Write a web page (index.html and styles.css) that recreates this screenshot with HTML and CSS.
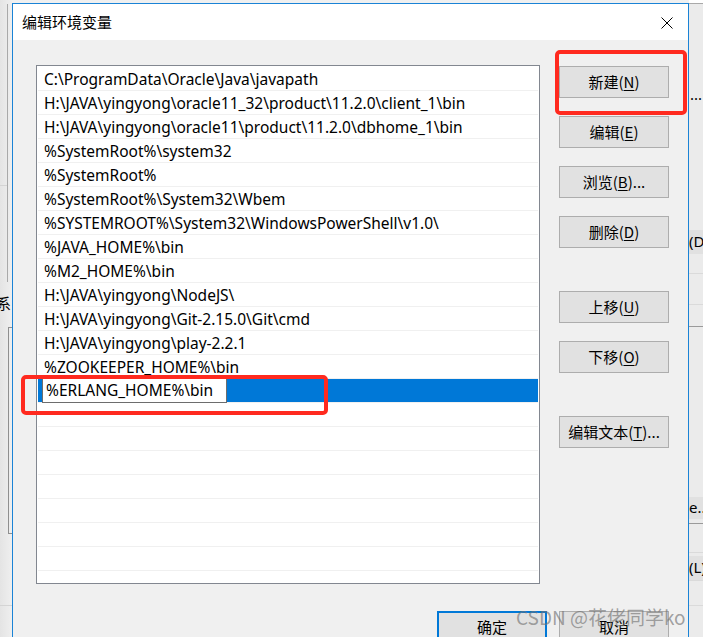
FILE: index.html
```html
<!DOCTYPE html>
<html lang="zh-CN">
<head>
<meta charset="utf-8">
<title>编辑环境变量</title>
<link rel="stylesheet" href="styles.css">
</head>
<body>
<div class="desktop">
  <div class="bgwin bgwin-left">
    <div class="bl-line"></div>
    <div class="bl-hline"></div>
    <div class="bl-char">系</div>
    <div class="bl-box"></div>
    <div class="bl-sep"></div>
  </div>
  <div class="bgwin bgwin-right">
    <div class="br-top"></div>
    <div class="br-dots">...</div>
    <div class="br-btn br-btn-d">(D)</div>
    <div class="br-line br-l1"></div>
    <div class="br-line br-l2"></div>
    <div class="br-line dark br-l3"></div>
    <div class="br-btn br-btn-e">e...</div>
    <div class="br-line dark br-l4"></div>
    <div class="br-line br-l5"></div>
    <div class="br-btn br-btn-l">(L)</div>
    <div class="br-line br-l6"></div>
    <div class="br-line br-l7"></div>
  </div>

  <div class="dialog">
    <div class="titlebar">
      <span class="title">编辑环境变量</span>
      <svg class="close" width="12" height="12" viewBox="0 0 12 12" aria-hidden="true">
        <path d="M0.5 0.5 L11.5 11.5 M11.5 0.5 L0.5 11.5" stroke="#000" stroke-width="1" fill="none"/>
      </svg>
    </div>
    <div class="body">
      <div class="main">
        <div class="list">
          <div class="row">C:\ProgramData\Oracle\Java\javapath</div>
          <div class="row">H:\JAVA\yingyong\oracle11_32\product\11.2.0\client_1\bin</div>
          <div class="row">H:\JAVA\yingyong\oracle11\product\11.2.0\dbhome_1\bin</div>
          <div class="row">%SystemRoot%\system32</div>
          <div class="row">%SystemRoot%</div>
          <div class="row">%SystemRoot%\System32\Wbem</div>
          <div class="row">%SYSTEMROOT%\System32\WindowsPowerShell\v1.0\</div>
          <div class="row">%JAVA_HOME%\bin</div>
          <div class="row">%M2_HOME%\bin</div>
          <div class="row">H:\JAVA\yingyong\NodeJS\</div>
          <div class="row">H:\JAVA\yingyong\Git-2.15.0\Git\cmd</div>
          <div class="row">H:\JAVA\yingyong\play-2.2.1</div>
          <div class="row">%ZOOKEEPER_HOME%\bin</div>
          <div class="row selected"><span class="editbox">%ERLANG_HOME%\bin</span></div>
          <div class="row"></div>
          <div class="row"></div>
          <div class="row"></div>
          <div class="row"></div>
          <div class="row"></div>
          <div class="row"></div>
          <div class="row"></div>
          <div class="row"></div>
        </div>
        <div class="side">
          <div class="btn">新建(<u>N</u>)</div>
          <div class="btn">编辑(<u>E</u>)</div>
          <div class="btn">浏览(<u>B</u>)...</div>
          <div class="btn">删除(<u>D</u>)</div>
          <div class="btn spaced">上移(<u>U</u>)</div>
          <div class="btn">下移(<u>O</u>)</div>
          <div class="btn spaced">编辑文本(<u>T</u>)...</div>
        </div>
      </div>
      <div class="footer">
        <div class="btn default">确定</div>
        <div class="btn">取消</div>
      </div>
    </div>
  </div>

  <div class="mark mark-edit"></div>
  <div class="mark mark-new"></div>
  <div class="watermark">CSDN @花佬同学ko</div>
</div>
</body>
</html>
```

FILE: styles.css
```css
* { box-sizing: border-box; }

html, body {
  margin: 0;
  padding: 0;
}

body {
  width: 703px;
  height: 637px;
  overflow: hidden;
  background: #f0f0f0;
  font-family: "Noto Sans", "Noto Sans CJK SC", sans-serif;
  font-size: 15px;
  color: #000;
}

.desktop {
  position: relative;
  width: 703px;
  height: 637px;
  overflow: hidden;
}

/* ---------- background window pieces ---------- */
.bgwin {
  position: absolute;
  top: 0;
  height: 637px;
  overflow: hidden;
}

.bgwin-left {
  left: 0;
  width: 12px;
  background: linear-gradient(to right, #e4e4e4, #efefef);
}

.bl-line {
  position: absolute;
  left: 7px;
  top: 4px;
  width: 1px;
  height: 278px;
  background: #a9a9a9;
}

.bl-hline {
  position: absolute;
  left: 0;
  top: 185px;
  width: 7px;
  height: 1px;
  background: #d4d4d4;
}

.bl-char {
  position: absolute;
  left: -4px;
  top: 293px;
  font-family: "Noto Sans CJK SC", sans-serif;
  font-size: 15px;
  line-height: 20px;
}

.bl-box {
  position: absolute;
  left: 8px;
  top: 327px;
  width: 20px;
  height: 207px;
  border: 1px solid #8f8f8f;
}

.bl-sep {
  position: absolute;
  left: 0;
  top: 605px;
  width: 12px;
  height: 1px;
  background: #d4d4d4;
}

.bgwin-right {
  left: 689px;
  width: 14px;
  background: #ebebeb;
}

.br-top {
  position: absolute;
  left: 0;
  top: 0;
  width: 14px;
  height: 4px;
  background: #fff;
  border-bottom: 1px solid #a9a9a9;
}

.br-dots {
  position: absolute;
  left: 1px;
  top: 84px;
  font-size: 15px;
  line-height: 20px;
}

.br-btn {
  position: absolute;
  left: 0;
  width: 14px;
  height: 24px;
  background: #e1e1e1;
  font-size: 15px;
  line-height: 23px;
  white-space: nowrap;
  overflow: hidden;
}

.br-btn-d { top: 230px; }
.br-btn-e { top: 497px; height: 22px; line-height: 21px; }
.br-btn-l { top: 556px; height: 24px; }

.br-line {
  position: absolute;
  left: 0;
  width: 14px;
  height: 1px;
  background: #dadada;
}

.br-line.dark { background: #9a9a9a; }

.br-l1 { top: 273px; }
.br-l2 { top: 304px; }
.br-l3 { top: 326px; }
.br-l4 { top: 523px; }
.br-l5 { top: 552px; }
.br-l6 { top: 580px; }
.br-l7 { top: 605px; }

/* ---------- dialog ---------- */
.dialog {
  position: absolute;
  left: 12px;
  top: 3px;
  width: 677px;
  height: 660px;
  border: 1px solid #1a83d6;
  background: #f0f0f0;
  display: flex;
  flex-direction: column;
}

.titlebar {
  height: 36px;
  background: #fff;
  display: flex;
  align-items: center;
  justify-content: space-between;
  padding: 0 15px 0 9px;
  flex: none;
}

.title {
  font-family: "Noto Sans CJK SC", sans-serif;
  font-size: 15px;
  line-height: 20px;
  margin-top: -1px;
}

.close {
  display: block;
  margin-top: 1px;
}

.body {
  padding: 25px 19px 0 23px;
}

.main {
  display: flex;
  gap: 19px;
}

.list {
  width: 504px;
  height: 519px;
  border: 1px solid #828790;
  background: #fff;
  padding: 1px;
  overflow: hidden;
  flex: none;
}

.row {
  height: 24px;
  border-bottom: 1px solid #f0f0f0;
  padding-left: 6px;
  line-height: 24px;
  white-space: nowrap;
  font-size: 15.5px;
}

.row.selected {
  background: #0078d7;
  padding-left: 4px;
  position: relative;
}

.editbox {
  display: block;
  width: 185px;
  height: 25px;
  border: 1px solid #6d6d6d;
  background: #fff;
  padding-left: 3px;
  line-height: 23px;
  position: relative;
  top: -1px;
}

.side {
  display: flex;
  flex-direction: column;
  gap: 18px;
  padding-top: 1px;
}

.btn {
  width: 110px;
  height: 32px;
  border: 1px solid #adadad;
  background: #e1e1e1;
  display: flex;
  align-items: center;
  justify-content: center;
  font-size: 15px;
  line-height: 20px;
  white-space: nowrap;
  font-family: "Noto Sans CJK SC", sans-serif;
}

.btn u {
  text-underline-offset: 2px;
}

.btn.spaced { margin-top: 25px; }

.btn.default {
  border: 2px solid #0078d7;
}

.footer {
  display: flex;
  justify-content: flex-end;
  gap: 12px;
  margin-top: 27px;
}

/* ---------- annotations ---------- */
.mark {
  position: absolute;
  border: 4px solid #ff2a1f;
  border-radius: 5px;
}

.mark-edit {
  left: 21px;
  top: 375px;
  width: 307px;
  height: 40px;
}

.mark-new {
  left: 555px;
  top: 50px;
  width: 132px;
  height: 65px;
}

.watermark {
  position: absolute;
  left: 516px;
  top: 605px;
  font-family: "Noto Sans CJK SC", sans-serif;
  font-size: 19px;
  line-height: 24px;
  color: rgba(115, 115, 115, 0.65);
  white-space: nowrap;
}
```
